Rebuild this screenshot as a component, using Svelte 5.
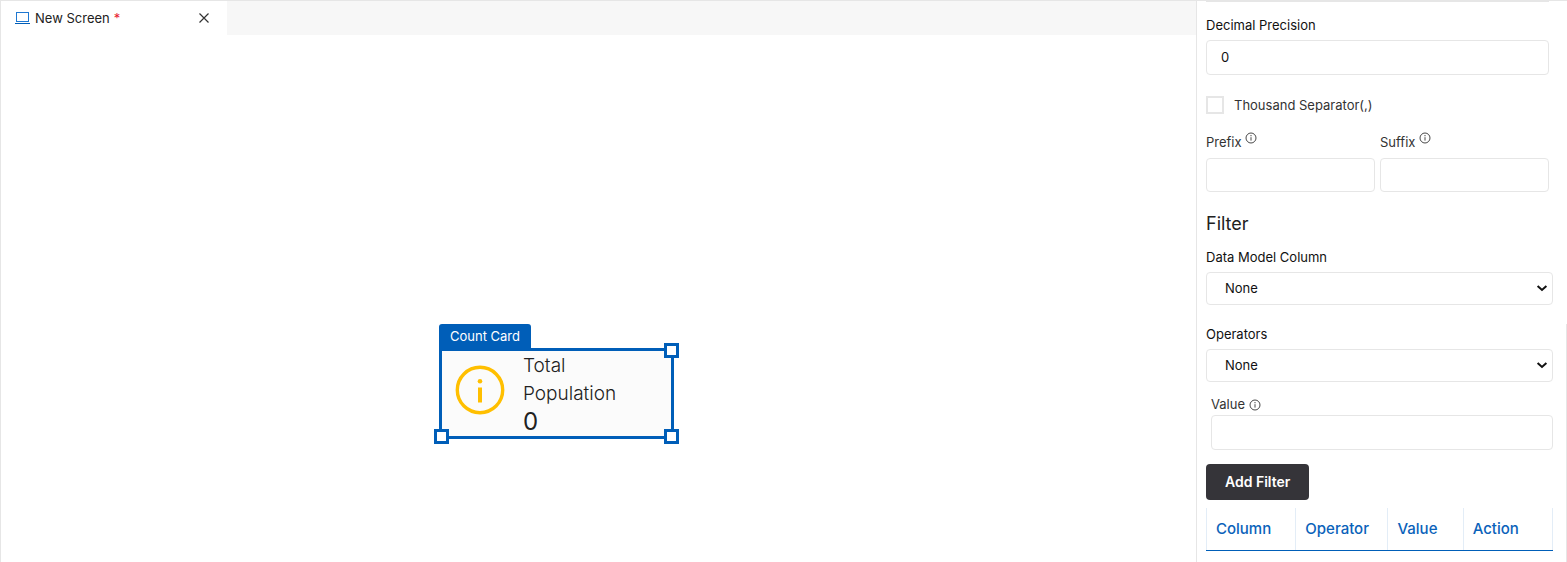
<script>
  let decimalPrecision = $state('0');
  let thousandSeparator = $state(false);
  let prefix = $state('');
  let suffix = $state('');
  let column = $state('None');
  let operator = $state('None');
  let value = $state('');

  const card = { x: 438, y: 289, title: 'Total Population', count: 0 };
  const headers = [
    { name: 'Column', width: 26 },
    { name: 'Operator', width: 27 },
    { name: 'Value', width: 21 },
    { name: 'Action', width: 26 }
  ];
</script>

{#snippet infoIcon()}
  <svg class="info-icon" viewBox="0 0 12 12" aria-hidden="true">
    <circle cx="6" cy="6" r="5" fill="none" stroke="currentColor" stroke-width="0.9" />
    <path d="M6 5.2v3.4" stroke="currentColor" stroke-width="0.9" />
    <circle cx="6" cy="3.7" r="0.6" fill="currentColor" />
  </svg>
{/snippet}

{#snippet chevron()}
  <svg class="chevron" viewBox="0 0 12 8" aria-hidden="true">
    <path d="M1.6 2l4.4 4 4.4-4" fill="none" stroke="#111" stroke-width="2" />
  </svg>
{/snippet}

<div class="designer">
  <main class="workspace">
    <!-- Tabs -->
    <div class="tab-bar">
      <div class="tab">
        <svg class="screen-icon" viewBox="0 0 16 14" aria-hidden="true">
          <rect x="1.5" y="1.5" width="12" height="9" fill="none" stroke="#1f78d1" />
          <path d="M0 12.5h15" stroke="#005eb8" />
        </svg>
        <span class="tab-name">New Screen</span>
        <span class="unsaved">*</span>
        <button class="close-btn" aria-label="Close tab">
          <svg viewBox="0 0 12 12" aria-hidden="true">
            <path d="M1.5 1.5l9 9M10.5 1.5l-9 9" stroke="#333" stroke-width="1.2" />
          </svg>
        </button>
      </div>
    </div>

    <!-- Canvas -->
    <div class="canvas">
      <div class="widget" style="left: {card.x}px; top: {card.y}px">
        <span class="widget-tag">Count Card</span>
        <div class="count-card">
          <svg class="count-icon" viewBox="0 0 50 50" aria-hidden="true">
            <circle cx="25" cy="25" r="22.7" fill="none" stroke="#ffbf00" stroke-width="3.4" />
            <circle cx="25" cy="16.3" r="2.3" fill="#ffbf00" />
            <path d="M25 22.5v15" stroke="#ffbf00" stroke-width="4" />
          </svg>
          <div class="count-text">
            <span class="count-title">{card.title}</span>
            <span class="count-value">{card.count}</span>
          </div>
          <i class="handle top-right"></i>
          <i class="handle bottom-left"></i>
          <i class="handle bottom-right"></i>
        </div>
      </div>
    </div>
  </main>

  <!-- Properties -->
  <aside class="properties">
    <div class="format">
      <div class="field">
        <label class="strong" for="decimal">Decimal Precision</label>
        <input id="decimal" class="box" type="text" bind:value={decimalPrecision} />
      </div>

      <label class="check-row">
        <input type="checkbox" bind:checked={thousandSeparator} />
        Thousand Separator(,)
      </label>

      <div class="affixes">
        <div class="field">
          <label for="prefix">Prefix <sup>{@render infoIcon()}</sup></label>
          <input id="prefix" class="box" type="text" bind:value={prefix} />
        </div>
        <div class="field">
          <label for="suffix">Suffix <sup>{@render infoIcon()}</sup></label>
          <input id="suffix" class="box" type="text" bind:value={suffix} />
        </div>
      </div>
    </div>

    <h2>Filter</h2>

    <div class="field select-field">
      <label class="strong" for="column">Data Model Column</label>
      <div class="select-wrap">
        <select id="column" class="box" bind:value={column}>
          <option>None</option>
        </select>
        {@render chevron()}
      </div>
    </div>

    <div class="field select-field">
      <label class="strong" for="operator">Operators</label>
      <div class="select-wrap">
        <select id="operator" class="box" bind:value={operator}>
          <option>None</option>
        </select>
        {@render chevron()}
      </div>
    </div>

    <div class="field value-field">
      <label for="value">Value {@render infoIcon()}</label>
      <input id="value" class="box" type="text" bind:value />
    </div>

    <button class="add-btn">Add Filter</button>

    <table class="filters">
      <thead>
        <tr>
          {#each headers as header}
            <th style="width: {header.width}%">{header.name}</th>
          {/each}
        </tr>
      </thead>
    </table>
  </aside>
</div>

<style>
  :global(body) {
    margin: 0;
    background: #fff;
  }

  .designer {
    display: flex;
    min-height: 100vh;
    box-sizing: border-box;
    border-top: 1px solid #e6e6e6;
    border-left: 1px solid #e6e6e6;
    font-family: Inter, sans-serif;
    font-optical-sizing: none;
    font-size: 13px;
    line-height: 16px;
    color: #212121;
  }

  .workspace {
    flex: 1;
    min-width: 0;
    display: flex;
    flex-direction: column;
  }

  .tab-bar {
    display: flex;
    height: 34px;
    background: #f7f7f7;
  }

  .tab {
    display: flex;
    align-items: center;
    width: 226px;
    padding: 0 17px 0 14px;
    box-sizing: border-box;
    background: #fff;
  }

  .screen-icon {
    width: 16px;
    height: 14px;
    margin-right: 4px;
  }

  .unsaved {
    margin-left: 4px;
    color: #e8202f;
  }

  .close-btn {
    display: flex;
    margin-left: auto;
    padding: 0;
    border: 0;
    background: none;
    cursor: pointer;
  }

  .close-btn svg {
    width: 12px;
    height: 12px;
  }

  .canvas {
    position: relative;
    flex: 1;
  }

  .widget {
    position: absolute;
    display: flex;
    flex-direction: column;
    align-items: flex-start;
    width: 235px;
  }

  .widget-tag {
    padding: 4px 11px;
    border-radius: 3px 3px 0 0;
    background: #005eb8;
    color: #fff;
  }

  .count-card {
    position: relative;
    display: flex;
    align-items: center;
    gap: 18px;
    width: 100%;
    height: 91px;
    padding: 0 14px 0 13px;
    box-sizing: border-box;
    border: 3px solid #005eb8;
    background: #fbfbfb;
  }

  .count-icon {
    flex: none;
    width: 50px;
    height: 50px;
    margin-bottom: 8px;
  }

  .count-text {
    display: flex;
    flex-direction: column;
    width: 110px;
    font-size: 19px;
    line-height: 28px;
    font-weight: 300;
  }

  .count-value {
    font-size: 24px;
    font-weight: 400;
  }

  .handle {
    position: absolute;
    width: 15px;
    height: 15px;
    box-sizing: border-box;
    border: 3px solid #005eb8;
    background: #fff;
  }

  .top-right {
    top: -8px;
    right: -8px;
  }

  .bottom-left {
    bottom: -8px;
    left: -8px;
  }

  .bottom-right {
    right: -8px;
    bottom: -8px;
  }

  .properties {
    position: relative;
    display: flex;
    flex-direction: column;
    width: 371px;
    padding: 0 14px 0 9px;
    box-sizing: border-box;
    border-left: 1px solid #e6e6e6;
  }

  .properties::after {
    content: '';
    position: absolute;
    top: 323px;
    right: 0;
    bottom: 0;
    border-right: 1px solid #e6e6e6;
  }

  .format {
    margin-right: 4px;
    border-top: 1px solid #e6e6e6;
    padding-top: 15px;
  }

  .field {
    display: flex;
    flex-direction: column;
    gap: 7px;
  }

  label {
    color: #333;
  }

  .strong {
    color: #111;
  }

  .box {
    width: 100%;
    height: 35px;
    padding: 0 14px 2px;
    box-sizing: border-box;
    border: 1px solid #e6e6e6;
    border-radius: 4px;
    background: #fff;
    font: inherit;
    color: #111;
  }

  .check-row {
    display: flex;
    align-items: center;
    gap: 10px;
    margin-top: 21px;
  }

  .check-row input {
    appearance: none;
    width: 18px;
    height: 18px;
    margin: 0;
    border: 2px solid #e6e6e6;
    background: #fff;
  }

  .check-row input:checked {
    background: #005eb8;
  }

  .affixes {
    display: grid;
    grid-template-columns: 1fr 1fr;
    gap: 5px;
    margin-top: 18px;
  }

  .affixes .field {
    gap: 8px;
  }

  .affixes .box {
    height: 34px;
  }

  .info-icon {
    width: 12px;
    height: 12px;
    vertical-align: -2px;
  }

  sup {
    font-size: 12px;
    line-height: 0;
  }

  h2 {
    margin: 20px 0 13px;
    font-size: 18px;
    line-height: 24px;
    font-weight: 400;
  }

  .select-field {
    margin-bottom: 21px;
  }

  .select-wrap {
    position: relative;
    display: flex;
  }

  .select-wrap .box {
    appearance: none;
    height: 33px;
    padding: 0 24px 2px 18px;
  }

  .chevron {
    position: absolute;
    top: 12px;
    right: 5px;
    width: 12px;
    height: 8px;
    pointer-events: none;
  }

  .value-field {
    gap: 3px;
    margin: -7px 0 14px 5px;
  }

  .add-btn {
    align-self: flex-start;
    height: 36px;
    padding: 0 19px;
    border: 0;
    border-radius: 4px;
    background: #353439;
    color: #fff;
    font: inherit;
    font-size: 14px;
    font-weight: 600;
    cursor: pointer;
  }

  .filters {
    width: 100%;
    margin-top: 8px;
    table-layout: fixed;
    border-collapse: collapse;
  }

  th {
    height: 42px;
    padding: 0 9px;
    border: 1px solid #e3edf7;
    border-top: 0;
    border-bottom-color: #005eb8;
    font-size: 15px;
    font-weight: 500;
    text-align: left;
    color: #0a62ba;
  }
</style>
